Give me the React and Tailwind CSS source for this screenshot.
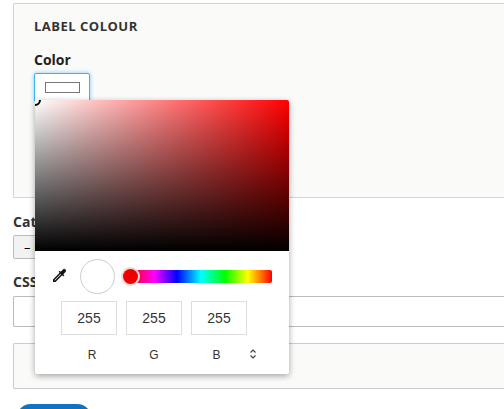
export default function App() {
  const f = { fontFamily: '"Open Sans", "Noto Sans", sans-serif' };
  const a = { fontFamily: 'Arial, "Liberation Sans", sans-serif' };
  return (
    <div className="relative w-[504px] h-[409px] overflow-hidden bg-white" style={f}>
      <div className="pl-[13px] pt-[3px]">
        <div className="h-[195px] border border-[#d4d4d4] border-r-0 rounded-l-[2px] bg-[#fafaf9] pl-[20px] pt-[13px]">
          <div className="text-[13px] font-bold tracking-[0.5px] text-[#333]">LABEL COLOUR</div>
          <div className="mt-[12px] text-[14px] font-bold text-[#222]">Color</div>
          <div className="mt-[3px] w-[56px] h-[29px] border border-[#40b0f0] rounded-[2px] bg-white shadow-[0_0_4px_#7cc8f5] flex items-center justify-center">
            <div className="w-[35px] h-[11px] border border-[#777] bg-white" />
          </div>
        </div>
        <div className="mt-[15px] text-[14px] font-bold text-[#333] leading-[18px]">Category</div>
        <div className="mt-[4px] w-[120px] h-[24px] border border-[#bbb] rounded-[2px] bg-[#f2f2f2] text-[13px] pl-[10px] leading-[22px]">– None –</div>
        <div className="mt-[14px] text-[14px] font-bold text-[#333] leading-[18px]">CSS class</div>
        <div className="mt-[5px] h-[31px] border border-[#bbb] border-r-0 rounded-l-[2px] bg-white" />
        <div className="mt-[16px] h-[46px] border border-[#ccc] border-r-0 rounded-l-[2px] bg-[#fafaf9]" />
        <div className="mt-[15px] ml-[3px] w-[76px] h-[30px] rounded-full bg-[#0f73c1]" />
      </div>

      <div className="absolute left-[35px] top-[100px] w-[254px] h-[274px] bg-white rounded-[2px] shadow-[0_2px_6px_rgba(0,0,0,0.35)]" style={a}>
        <div className="relative h-[151px] rounded-t-[2px] overflow-hidden" style={{ background: "linear-gradient(to bottom, transparent, #000), linear-gradient(to right, #fff, #f00)" }}>
          <div className="absolute -left-[6px] -top-[6px] w-[12px] h-[12px] rounded-full border-2 border-black" />
        </div>
        <div className="flex items-center h-[50px] pl-[15px]">
          <svg width="18" height="18" viewBox="0 0 24 24" className="mr-[12px]">
            <path d="M20.7 3.3a2.4 2.4 0 0 0-3.4 0l-3 3-1.4-1.4-1.4 1.4 1.4 1.4L4 16.6V20h3.4l8.9-8.9 1.4 1.4 1.4-1.4-1.4-1.4 3-3a2.4 2.4 0 0 0 0-3.4zM6.6 18H6v-.6l8.3-8.3.6.6z" fill="#111" />
          </svg>
          <div className="w-[35px] h-[35px] rounded-full border border-[#ccc] bg-white mr-[15px]" />
          <div className="relative w-[142px] h-[13px] rounded-[2px]" style={{ background: "linear-gradient(to left, #f00, #ff0 17%, #0f0 33%, #0ff 50%, #00f 67%, #f0f 83%, #f00)" }}>
            <div className="absolute -left-[7px] -top-[1px] w-[15px] h-[15px] rounded-full bg-[#e00] shadow-[0_0_0_2px_#f3d6d6]" />
          </div>
        </div>
        <div className="flex gap-[9px] pl-[26px]">
          {["255", "255", "255"].map((v, i) => (
            <div key={i} className="w-[56px] h-[34px] border border-[#ddd] flex items-center justify-center text-[14px] text-[#333]">{v}</div>
          ))}
        </div>
        <div className="flex pl-[26px] mt-[11px] text-[12px] text-[#333]">
          <div className="w-[62px] text-center">R</div>
          <div className="w-[62px] text-center">G</div>
          <div className="w-[63px] text-center">B</div>
          <svg width="10" height="12" viewBox="0 0 10 12" className="ml-[0px] mt-[2px]"><path d="M2.5 4.5L5 2 7.5 4.5M2.5 7.5L5 10 7.5 7.5" fill="none" stroke="#444" strokeWidth="1.2"/></svg>
        </div>
      </div>
    </div>
  );
}
